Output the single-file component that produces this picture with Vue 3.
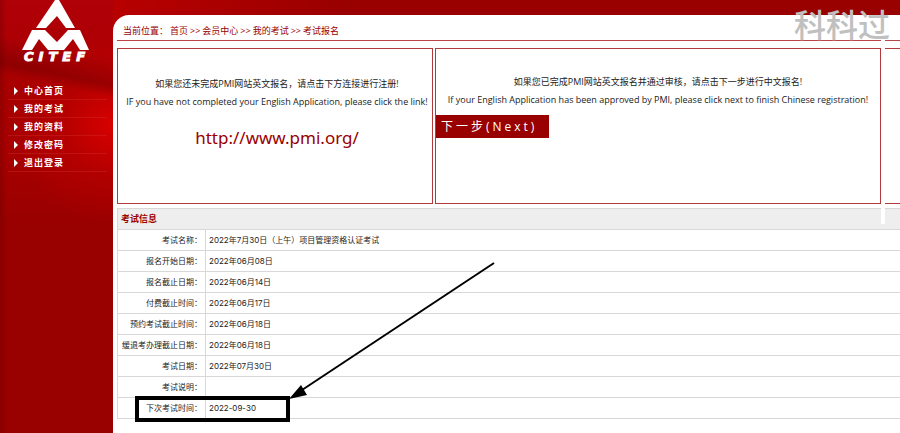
<script setup>
const menu = ['中心首页', '我的考试', '我的资料', '修改密码', '退出登录']
const crumbs = ['首页', '会员中心', '我的考试', '考试报名']
const rows = [
  ['考试名称：', '2022年7月30日（上午）项目管理资格认证考试'],
  ['报名开始日期：', '2022年06月08日'],
  ['报名截止日期：', '2022年06月14日'],
  ['付费截止时间：', '2022年06月17日'],
  ['预约考试截止时间：', '2022年06月18日'],
  ['缓退考办理截止日期：', '2022年06月18日'],
  ['考试日期：', '2022年07月30日'],
  ['考试说明：', ''],
  ['下次考试时间：', '2022-09-30'],
]
</script>

<template>
  <div class="page">
    <aside class="sidebar">
      <svg class="logo" viewBox="0 0 70 64" role="img" aria-label="CITEF">
        <path fill="#fff" d="M34 0H38L54 28H45L36 16 25 28H15Z" />
        <path fill="#fff" d="M11 30H24L36 42 47 30H59L68 50H59L52 39 43 50H27L18 39 11 50H1Z" />
        <text class="logo-text" x="3" y="61">CITEF</text>
      </svg>
      <nav class="menu">
        <a v-for="item in menu" :key="item" href="#" class="menu-item">
          <svg class="caret" viewBox="0 0 4 8" aria-hidden="true"><path fill="#fff" d="M0 0 4 4 0 8Z" /></svg>
          <span>{{ item }}</span>
        </a>
      </nav>
    </aside>

    <main class="main">
      <div class="panel">
        <nav class="crumbs">
          <span>当前位置：</span>
          <template v-for="(c, i) in crumbs" :key="c">
            <span v-if="i">&gt;&gt;</span>
            <a href="#">{{ c }}</a>
          </template>
        </nav>
        <div class="watermark">科科过</div>

        <section class="boxes">
          <div class="box first">
            <p>如果您还未完成PMI网站英文报名，请点击下方连接进行注册!</p>
            <p>IF you have not completed your English Application, please click the link!</p>
            <a class="pmi" href="#">http://www.pmi.org/</a>
          </div>
          <div class="box second">
            <p>如果您已完成PMI网站英文报名并通过审核，请点击下一步进行中文报名!</p>
            <p>If your English Application has been approved by PMI, please click next to finish Chinese registration!</p>
            <button class="next" type="button">下一步(Next)</button>
          </div>
          <div class="box rest"></div>
        </section>

        <div class="info">
          <table>
            <thead>
              <tr><th colspan="2">考试信息</th></tr>
            </thead>
            <tbody>
              <tr v-for="r in rows" :key="r[0]">
                <th scope="row">{{ r[0] }}</th>
                <td>{{ r[1] }}</td>
              </tr>
            </tbody>
          </table>
          <svg class="mark" viewBox="0 0 362 162" aria-hidden="true">
            <rect x="2" y="136" width="151" height="22" fill="none" stroke="#000" stroke-width="4" />
            <path d="M359 1 167 128" stroke="#000" stroke-width="2" />
            <path d="M154 137 166 123 172 133Z" />
          </svg>
        </div>
        <i class="seam"></i>
      </div>
    </main>
  </div>
</template>

<style>
body {
  background: #900;
}
</style>

<style scoped>
.page {
  display: grid;
  grid-template-columns: 113px 1fr;
  min-height: 100vh;
  overflow: hidden;
  background: #900;
  font: 9px/12px "Open Sans", "Noto Sans CJK SC", sans-serif;
  color: #222;
}
a {
  color: inherit;
  text-decoration: none;
}
.sidebar {
  background:
    linear-gradient(90deg, rgba(80, 0, 0, 0.25), transparent 6%),
    linear-gradient(192deg, transparent 58px, rgba(90, 0, 0, 0.35) 84px, transparent 96px) 0 0 / 100% 110px no-repeat,
    radial-gradient(circle at 100% 125px, #d80000, rgba(200, 0, 0, 0.4) 50px, transparent 100px),
    linear-gradient(#b00008, #a80000 90px, #a80000 150px, #900 225px);
}
.logo {
  display: block;
  width: 70px;
  height: 64px;
  margin-left: 21px;
}
.logo-text {
  fill: #fff;
  stroke: #fff;
  stroke-width: 1px;
  font: italic 700 13px "DejaVu Sans", sans-serif;
  letter-spacing: 5px;
}
.menu {
  padding: 18px 6px 0 8px;
}
.menu-item {
  display: flex;
  align-items: center;
  gap: 6px;
  height: 17px;
  padding-left: 6px;
  border-bottom: 1px solid rgba(220, 60, 60, 0.3);
  color: #fff;
  font-weight: 700;
  letter-spacing: 1px;
}
.caret {
  width: 4px;
  height: 8px;
}
.main {
  padding-top: 15px;
  background: linear-gradient(90deg, #b80000, #900 30%);
}
.panel {
  position: relative;
  min-height: 100%;
  box-sizing: border-box;
  padding-left: 4px;
  background: #fff;
  border-top-left-radius: 16px;
}
.crumbs {
  display: flex;
  gap: 2px;
  height: 26px;
  box-sizing: border-box;
  padding: 10px 0 0 6px;
  border-bottom: 1px solid #b44;
  color: #900;
}
.watermark {
  position: absolute;
  top: -10px;
  right: 10px;
  color: #c0c0c0;
  font-size: 32px;
  font-weight: 500;
  line-height: 40px;
}
.boxes {
  display: grid;
  grid-template-columns: 316fr 446fr 17fr;
  column-gap: 2px;
  margin-top: 7px;
}
.box {
  height: 156px;
  box-sizing: border-box;
  border: 1px solid #b33a3a;
  text-align: center;
  white-space: nowrap;
}
.first {
  padding: 29px 0 0 4px;
}
.second {
  padding-top: 27px;
}
.rest {
  border-width: 1px 0;
}
.box p {
  margin: 0 0 6px;
}
.pmi {
  display: block;
  margin-top: 16px;
  color: #900;
  font-family: "Noto Sans", sans-serif;
  font-size: 17px;
  line-height: 28px;
}
.next {
  display: block;
  height: 23px;
  margin-top: 9px;
  padding: 0 12px 0 5px;
  border: 0;
  background: #900;
  color: #fff;
  font: 12px/22px "Open Sans", "Noto Sans CJK SC", sans-serif;
  letter-spacing: 3px;
}
.info {
  position: relative;
  margin-top: 4px;
}
table {
  width: 100%;
  border-collapse: collapse;
}
th,
td {
  height: 21px;
  box-sizing: border-box;
  padding: 0 3px;
  border: 1px solid #d8d8d8;
  border-right: 0;
  line-height: 12px;
  font-weight: 400;
  text-align: left;
}
tbody th,
tbody td {
  font-family: Inter, "Noto Sans CJK SC", sans-serif;
  font-size: 8px;
}
tbody th {
  width: 88px;
  text-align: right;
  white-space: nowrap;
}
thead th {
  background: #eee;
  color: #900;
  font-weight: 700;
}
.mark {
  position: absolute;
  top: 54px;
  left: 18px;
  width: 362px;
  height: 162px;
}
.seam {
  position: absolute;
  top: 24px;
  right: 15px;
  width: 4px;
  height: 185px;
  background: #fff;
}
</style>
